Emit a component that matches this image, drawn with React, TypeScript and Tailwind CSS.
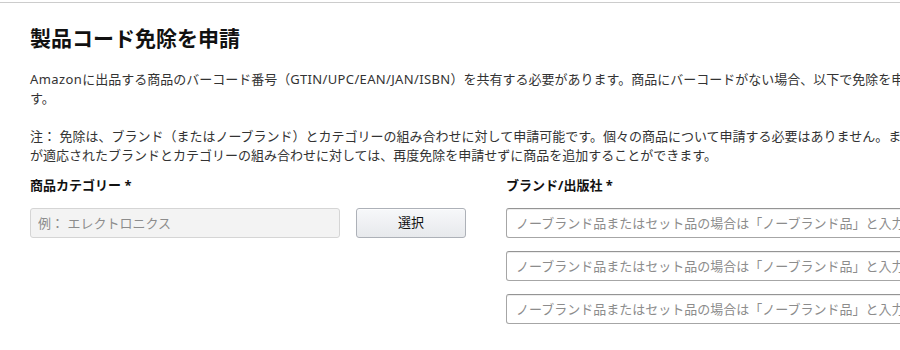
export default function App() {
  const font = { fontFamily: '"Noto Sans", "Noto Sans CJK JP", sans-serif' }

  return (
    <div className="h-[350px] w-[900px] overflow-hidden bg-white" style={font}>
      <div className="w-[1120px]">
        <div className="mt-[2px] border-t border-[#cccccc]" />

        <div className="pl-[30px]">
          {/* Title */}
          <h1 className="mt-[21px] text-[21px] font-bold leading-[28px] text-[#111111]">
            製品コード免除を申請
          </h1>

          {/* Description */}
          <div className="mt-[18px] text-[13px] leading-[19px] text-[#333333]">
            <p className="whitespace-nowrap">
              <span className="tracking-[0.4px]">Amazon</span>に出品する商品のバーコード番号（
              <span className="tracking-[0.35px]">GTIN/UPC/EAN/JAN/ISBN</span>
              ）を共有する必要があります。商品にバーコードがない場合、以下で免除を申請できま
            </p>
            <p>す。</p>
            <p className="mt-[19px] whitespace-nowrap">
              注： 免除は、ブランド（またはノーブランド）とカテゴリーの組み合わせに対して申請可能です。個々の商品について申請する必要はありません。また、免除
            </p>
            <p className="whitespace-nowrap">
              が適応されたブランドとカテゴリーの組み合わせに対しては、再度免除を申請せずに商品を追加することができます。
            </p>
          </div>

          {/* Form */}
          <div className="mt-[11px] flex gap-[40px]">
            <div className="w-[436px]">
              <label className="block text-[13px] font-bold leading-[19px] text-[#111111]">
                商品カテゴリー *
              </label>
              <div className="mt-[12.5px] flex gap-[16px]">
                <input
                  disabled
                  placeholder="例： エレクトロニクス"
                  className="h-[30px] w-[310px] rounded-[3px] border border-[#d5d5d5] bg-[#f3f3f3] px-[7px] text-[13px] placeholder:text-[#8c8c8c]"
                />
                <button className="h-[30px] w-[110px] rounded-[3px] border border-[#adb1b8] bg-gradient-to-b from-[#f7f8fa] to-[#e7e9ec] text-[13px] text-[#111111] shadow-[0_1px_0_rgba(255,255,255,0.6)_inset]">
                  選択
                </button>
              </div>
            </div>

            <div className="w-[580px]">
              <label className="block text-[13px] font-bold leading-[19px] text-[#111111]">
                ブランド/出版社 *
              </label>
              <div className="mt-[12.5px] flex flex-col gap-[13px]">
                {[0, 1, 2].map((i) => (
                  <input
                    key={i}
                    placeholder="ノーブランド品またはセット品の場合は「ノーブランド品」と入力してください"
                    className="h-[30px] w-full rounded-[3px] border border-[#a6a6a6] border-t-[#949494] bg-white px-[9px] text-[13px] shadow-[0_1px_0_rgba(255,255,255,0.5),0_1px_0_rgba(0,0,0,0.07)_inset] placeholder:text-[#8c8c8c]"
                  />
                ))}
              </div>
            </div>
          </div>
        </div>
      </div>
    </div>
  )
}
